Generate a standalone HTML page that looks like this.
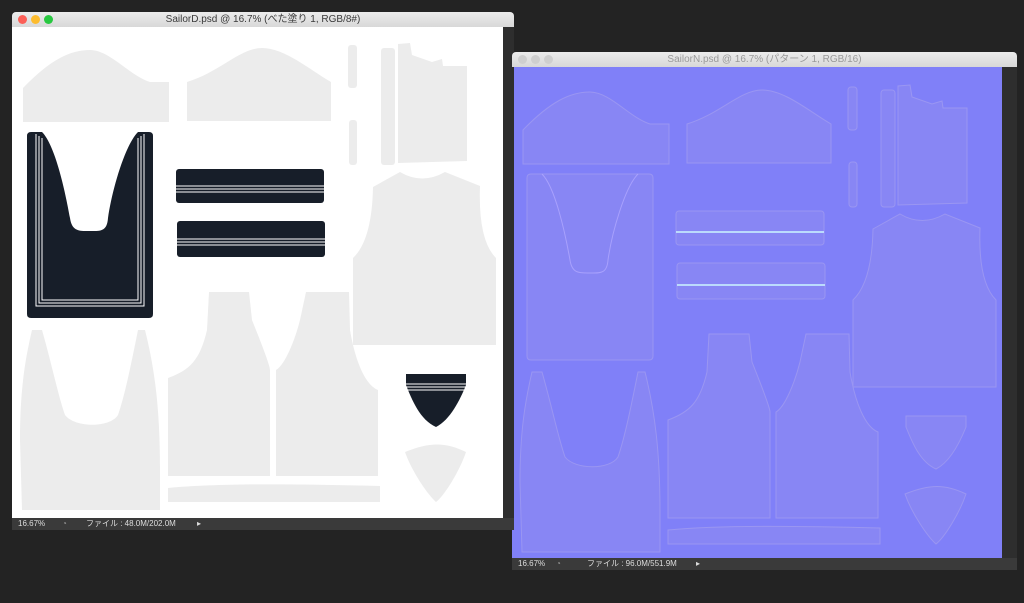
<!DOCTYPE html>
<html><head><meta charset="utf-8"><style>
html,body{margin:0;padding:0;background:#232323;width:1024px;height:603px;overflow:hidden;font-family:"Liberation Sans","Noto Sans CJK JP",sans-serif}
.win{position:absolute}
.title{position:absolute;left:0;right:0;top:0;height:15px;background:linear-gradient(#ececec,#d8d8d8);border-radius:4px 4px 0 0;font-size:10px;color:#3a3a3a;text-align:center;line-height:15px}
.dot{position:absolute;top:3px;width:9px;height:9px;border-radius:50%}
.status{position:absolute;left:0;right:0;height:12px;background:#3a3a3a;color:#ddd;font-size:8px;line-height:12px}
.status span{position:absolute;top:0}
</style></head><body>
<svg width="1024" height="603" style="position:absolute;left:0;top:0">
<defs>
<g id="pieces">
<path d="M23,88 C50,60 70,50 90,50 C110,50 130,76 150,82 L169,82 L169,122 L23,122 Z"/>
<path d="M187,82 C220,72 240,48 262,48 C285,48 310,70 331,82 L331,121 L187,121 Z"/>
<rect x="348" y="45" width="9" height="43" rx="3"/>
<rect x="349" y="120" width="8" height="45" rx="3"/>
<rect x="381" y="48" width="14" height="117" rx="3"/>
<path d="M398,163 L398,44 L410,43 L412,55 L432,62 L442,59 L443,66 L467,66 L467,161 Z"/>
<path d="M373,187 L400,172 Q422,185 445,172 L480,186 Q478,240 496,258 L496,345 L353,345 L353,258 Q372,240 373,187 Z"/>
<path d="M32,330 L42,330 C52,365 58,395 65,415 C75,428 110,428 118,415 C125,395 132,360 138,330 L145,330 C155,370 160,410 160,470 L160,510 L22,510 L20,440 C20,390 25,360 32,330 Z"/>
<path d="M209,292 L249,292 L252,320 C260,340 270,365 270,370 L270,476 L168,476 L168,378 C190,370 200,360 207,330 Z"/>
<path d="M306,292 L349,292 L350,330 C355,360 365,385 378,390 L378,476 L276,476 L276,370 C285,365 295,340 300,320 Z"/>
<path d="M168,488 C220,483 300,484 380,486 L380,502 L168,502 Z"/>
<path d="M405,452 C430,442 445,442 466,452 C460,470 445,495 436,502 C428,495 412,472 405,452 Z"/>
</g>
<g id="navy">
<path fill-rule="evenodd" d="M27,136 Q27,132 31,132 L149,132 Q153,132 153,136 L153,314 Q153,318 149,318 L31,318 Q27,318 27,314 Z M42,132 C55,145 65,190 70,218 C72,232 80,231 90,231 C100,231 107,232 108,218 C112,190 125,145 138,132 Z"/>
<rect x="176" y="169" width="148" height="34" rx="3"/>
<rect x="177" y="221" width="148" height="36" rx="3"/>
<path d="M406,374 L466,374 L466,385 C460,400 450,420 436,427 C420,420 412,400 406,385 Z"/>
</g>
<g id="navyfull">
<path d="M27,136 Q27,132 31,132 L149,132 Q153,132 153,136 L153,314 Q153,318 149,318 L31,318 Q27,318 27,314 Z"/>
<rect x="176" y="169" width="148" height="34" rx="3"/>
<rect x="177" y="221" width="148" height="36" rx="3"/>
</g>
</defs>
<rect x="12" y="27" width="491" height="491" fill="#fff"/>
<use href="#pieces" fill="#ececec"/>
<use href="#navy" fill="#171e29"/>
<g stroke="#fff" stroke-width="1" fill="none">
<path d="M36,134 L36,306 L144,306 L144,134"/><path d="M39,136 L39,303 L141,303 L141,136"/><path d="M42,138 L42,300 L138,300 L138,138"/>
<line x1="176" y1="186" x2="324" y2="186"/><line x1="176" y1="189" x2="324" y2="189"/><line x1="176" y1="192" x2="324" y2="192"/>
<line x1="177" y1="239" x2="325" y2="239"/><line x1="177" y1="242" x2="325" y2="242"/><line x1="177" y1="245" x2="325" y2="245"/>
<line x1="394" y1="384" x2="472" y2="384"/><line x1="394" y1="387" x2="472" y2="387"/><line x1="394" y1="390" x2="472" y2="390"/>
</g>
<rect x="512" y="67" width="490" height="491" fill="#8080f8"/>
<g transform="translate(500,42)" fill="#8886f4" stroke="#9a96f2" stroke-width="1">
<use href="#pieces"/>
<use href="#navyfull"/>
<path d="M406,374 L466,374 L466,385 C460,400 450,420 436,427 C420,420 412,400 406,385 Z"/>
</g>
<g transform="translate(500,42)" stroke="#b0a8ff" stroke-width="1" fill="none" opacity=".8">
<path d="M42,132 C55,145 65,190 70,218 C72,232 80,231 90,231 C100,231 107,232 108,218 C112,190 125,145 138,132"/>
<line x1="176" y1="190" x2="324" y2="190" stroke="#c8f0ff" stroke-width="2"/>
<line x1="177" y1="243" x2="325" y2="243" stroke="#c8f0ff" stroke-width="2"/>
</g>
</svg>
<div class="win" style="left:12px;top:12px;width:502px;height:518px">
<div class="title"><div class="dot" style="left:6px;background:#fc5f57"></div><div class="dot" style="left:19px;background:#fdbc2e"></div><div class="dot" style="left:32px;background:#28c840"></div>SailorD.psd @ 16.7% (べた塗り 1, RGB/8#)</div>
<div style="position:absolute;left:491px;top:15px;width:11px;height:491px;background:#2e2e2e"></div>
<div class="status" style="top:506px"><span style="left:6px">16.67%</span><span style="left:50px;color:#999">◔</span><span style="left:74px">ファイル : 48.0M/202.0M</span><span style="left:185px">▸</span></div>
</div>
<div class="win" style="left:512px;top:52px;width:505px;height:518px">
<div class="title" style="color:#9a9a9a"><div class="dot" style="left:6px;background:#cfcfcf"></div><div class="dot" style="left:19px;background:#cfcfcf"></div><div class="dot" style="left:32px;background:#cfcfcf"></div>SailorN.psd @ 16.7% (パターン 1, RGB/16)</div>
<div style="position:absolute;left:490px;top:15px;width:15px;height:491px;background:#2e2e2e"></div>
<div class="status" style="top:506px"><span style="left:6px">16.67%</span><span style="left:44px;color:#999">◔</span><span style="left:75px">ファイル : 96.0M/551.9M</span><span style="left:184px">▸</span></div>
</div>
</body></html>
